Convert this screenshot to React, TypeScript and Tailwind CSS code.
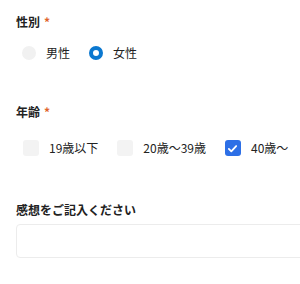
import React, { useState } from 'react';

const ages = ['19歳以下', '20歳〜39歳', '40歳〜'];

export default function App() {
  const [gender, setGender] = useState('女性');
  const [checked, setChecked] = useState<string[]>(['40歳〜']);

  const toggle = (a: string) =>
    setChecked(c => (c.includes(a) ? c.filter(x => x !== a) : [...c, a]));

  return (
    <div className="w-[300px] h-[284px] overflow-hidden bg-white px-4 text-[#222] font-['Noto_Sans_CJK_JP','Noto_Sans',sans-serif]">
      <div className="pt-3 text-xs font-bold leading-5">
        性別<span className="ml-1 text-[#e0622a]">*</span>
      </div>
      <div className="mt-[11px] flex items-center h-5 pl-[6px]">
        {['男性', '女性'].map(g => (
          <label key={g} className="flex items-center shrink-0 whitespace-nowrap mr-[19px] cursor-pointer" onClick={() => setGender(g)}>
            {gender === g ? (
              <span className="shrink-0 w-[14px] h-[14px] rounded-full border-[4px] border-[#0b78d0] bg-white" />
            ) : (
              <span className="shrink-0 w-[14px] h-[14px] rounded-full bg-[#f1f1f1]" />
            )}
            <span className="ml-[10px] text-xs leading-5">{g}</span>
          </label>
        ))}
      </div>

      <div className="mt-[39px] text-xs font-bold leading-5">
        年齢<span className="ml-1 text-[#e0622a]">*</span>
      </div>
      <div className="mt-[18px] flex items-center h-4 pl-[7px]">
        {ages.map(a => (
          <label key={a} className="flex items-center shrink-0 whitespace-nowrap mr-[19px] cursor-pointer" onClick={() => toggle(a)}>
            {checked.includes(a) ? (
              <span className="shrink-0 w-4 h-4 rounded-[3px] bg-[#2d6fe6] flex items-center justify-center">
                <svg viewBox="0 0 16 16" className="w-[13px] h-[13px]" fill="none" stroke="white" strokeWidth="2.2" strokeLinecap="round" strokeLinejoin="round">
                  <path d="M3.5 8.5l3 3 6-6.5" />
                </svg>
              </span>
            ) : (
              <span className="shrink-0 w-4 h-4 rounded-[3px] bg-[#f3f3f3]" />
            )}
            <span className="ml-[10px] text-xs leading-5">{a}</span>
          </label>
        ))}
      </div>

      <div className="mt-11 text-xs font-bold leading-5">感想をご記入ください</div>
      <textarea className="mt-1 block w-[300px] h-[34px] rounded border border-[#ececec] resize-none outline-none" />
    </div>
  );
}
